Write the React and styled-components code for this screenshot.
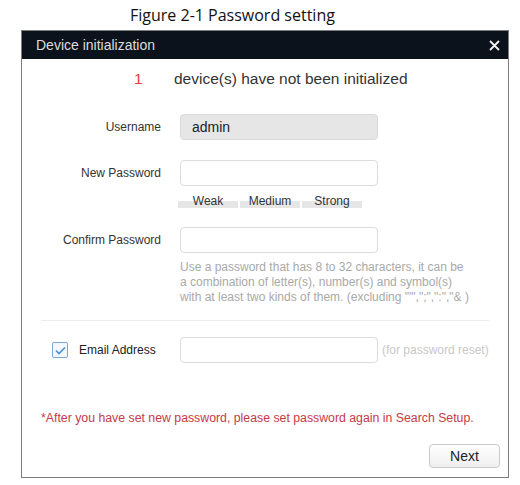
import React from "react";
import styled, { createGlobalStyle } from "styled-components";

const Global = createGlobalStyle`
  html, body { margin: 0; padding: 0; background: #fff; }
  body { font-family: "Liberation Sans", Arial, sans-serif; }
  * { box-sizing: border-box; }
`;

const Page = styled.div`
  width: 520px;
  height: 485px;
  padding-top: 4px;
  background: #fff;
`;

const Caption = styled.div`
  font-family: "Open Sans", "Noto Sans", sans-serif;
  font-size: 16px;
  line-height: 22px;
  color: #111;
  padding-left: 130px;
  height: 26px;
`;

const Dialog = styled.div`
  margin-left: 21px;
  width: 488px;
  height: 448px;
  border: 1px solid #7d7d7d;
  background: #fff;
  display: flex;
  flex-direction: column;
`;

const TitleBar = styled.div`
  height: 28px;
  background: #0c121c;
  display: flex;
  align-items: center;
  justify-content: space-between;
  padding: 0 8px 0 14px;
  color: #dcdcdc;
  font-size: 14px;
`;

const Close = styled.svg`
  width: 11px;
  height: 11px;
  display: block;
`;

const Body = styled.div`
  flex: 1;
  display: flex;
  flex-direction: column;
  padding: 0 8px 9px 19px;
`;

const Status = styled.div`
  margin-top: 10px;
  height: 20px;
  display: flex;
  align-items: center;
  padding-left: 93px;
  font-size: 15.5px;
  color: #333;
`;

const Count = styled.span`
  color: #e0423f;
  width: 40px;
`;

const Row = styled.div`
  display: flex;
  align-items: center;
  margin-top: ${(p) => p.$mt || 0}px;
`;

const Label = styled.div`
  width: 120px;
  text-align: right;
  font-size: 12px;
  color: #333;
  margin-right: 19px;
`;

const Input = styled.div`
  width: 198px;
  height: ${(p) => p.$h || 26}px;
  border: 1px solid ${(p) => (p.$filled ? "#dadada" : "#dcdcdc")};
  border-radius: 4px;
  background: ${(p) => (p.$filled ? "#e6e6e6" : "#fff")};
  display: flex;
  align-items: center;
  padding-left: 11px;
  font-size: 14px;
  color: #222;
`;

const Strength = styled.div`
  display: flex;
  gap: 2px;
  margin-top: 9px;
  margin-left: 137px;
  height: 14px;
`;

const Segment = styled.div`
  width: 60px;
  height: 14px;
  background: linear-gradient(to bottom, transparent 0, transparent 6px, #e6e6e6 6px, #e6e6e6 13px, transparent 13px);
  font-size: 12px;
  line-height: 13px;
  color: #333;
  text-align: center;
`;

const Hint = styled.div`
  margin-left: 139px;
  margin-top: 7px;
  font-size: 12px;
  line-height: 15px;
  color: #a9a9a9;
  white-space: nowrap;
`;

const HintLine = styled.div``;

const Separator = styled.div`
  margin-top: 15px;
  height: 1px;
  background: #ececec;
  width: 448px;
`;

const EmailRow = styled.div`
  display: flex;
  align-items: center;
  margin-top: 16px;
  padding-left: 11px;
`;

const Check = styled.div`
  width: 16px;
  height: 16px;
  border: 1px solid #7aa7d8;
  border-radius: 2px;
  background: #f4f8fc;
  display: flex;
  align-items: center;
  justify-content: center;
`;

const EmailLabel = styled.div`
  font-size: 12px;
  color: #222;
  margin-left: 11px;
  width: 101px;
`;

const Aside = styled.div`
  margin-left: 4px;
  font-size: 12px;
  color: #c8c8c8;
`;

const Note = styled.div`
  margin-top: 47px;
  line-height: 16px;
  font-size: 12.3px;
  color: #c63a47;
  white-space: nowrap;
`;

const Footer = styled.div`
  margin-top: auto;
  display: flex;
  justify-content: flex-end;
`;

const Button = styled.button`
  width: 71px;
  height: 24px;
  border: 1px solid #c9c9c9;
  border-radius: 4px;
  background: linear-gradient(#ffffff, #efefef);
  font-family: "Liberation Sans", Arial, sans-serif;
  font-size: 14px;
  color: #222;
  padding: 0;
`;

export default function App() {
  return (
    <>
      <Global />
      <Page>
        <Caption>Figure 2-1 Password setting</Caption>
        <Dialog>
          <TitleBar>
            <span>Device initialization</span>
            <Close viewBox="0 0 11 11">
              <path d="M1 1L10 10M10 1L1 10" stroke="#f2f2f2" strokeWidth="1.8" />
            </Close>
          </TitleBar>
          <Body>
            <Status>
              <Count>1</Count>
              <span>device(s) have not been initialized</span>
            </Status>
            <Row $mt={25}>
              <Label>Username</Label>
              <Input $filled>admin</Input>
            </Row>
            <Row $mt={20}>
              <Label>New Password</Label>
              <Input />
            </Row>
            <Strength>
              <Segment>Weak</Segment>
              <Segment>Medium</Segment>
              <Segment>Strong</Segment>
            </Strength>
            <Row $mt={18}>
              <Label>Confirm Password</Label>
              <Input />
            </Row>
            <Hint>
              <HintLine>Use a password that has 8 to 32 characters, it can be</HintLine>
              <HintLine>a combination of letter(s), number(s) and symbol(s)</HintLine>
              <HintLine>with at least two kinds of them. (excluding "'",";",":","&amp; )</HintLine>
            </Hint>
            <Separator />
            <EmailRow>
              <Check>
                <svg width="11" height="9" viewBox="0 0 11 9">
                  <path d="M1 4.5L4 7.5L10 1.5" fill="none" stroke="#4a8fd6" strokeWidth="1.6" />
                </svg>
              </Check>
              <EmailLabel>Email Address</EmailLabel>
              <Input />
              <Aside>(for password reset)</Aside>
            </EmailRow>
            <Note>*After you have set new password, please set password again in Search Setup.</Note>
            <Footer>
              <Button>Next</Button>
            </Footer>
          </Body>
        </Dialog>
      </Page>
    </>
  );
}
